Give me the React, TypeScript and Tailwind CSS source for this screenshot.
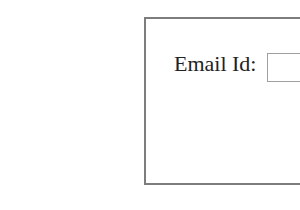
const App = () => {
  return (
    <div className="w-[300px] h-[210px] overflow-hidden bg-white">
      <div className="ml-[144px] mt-[17px] w-[220px] h-[168px] border-2 border-[#7d7d7d] bg-white">
        <div className="flex items-start pl-[28px] pt-[34px] gap-[11px]">
          <label
            className="mt-[-2px] text-[22px] leading-[25px] text-[#222] whitespace-nowrap"
            style={{ fontFamily: '"Liberation Serif", serif' }}
          >
            Email Id:
          </label>
          <input
            type="text"
            className="w-[120px] h-[29px] border border-[#a0a0a0] bg-white outline-none shrink-0"
          />
        </div>
      </div>
    </div>
  );
};

export default App;
